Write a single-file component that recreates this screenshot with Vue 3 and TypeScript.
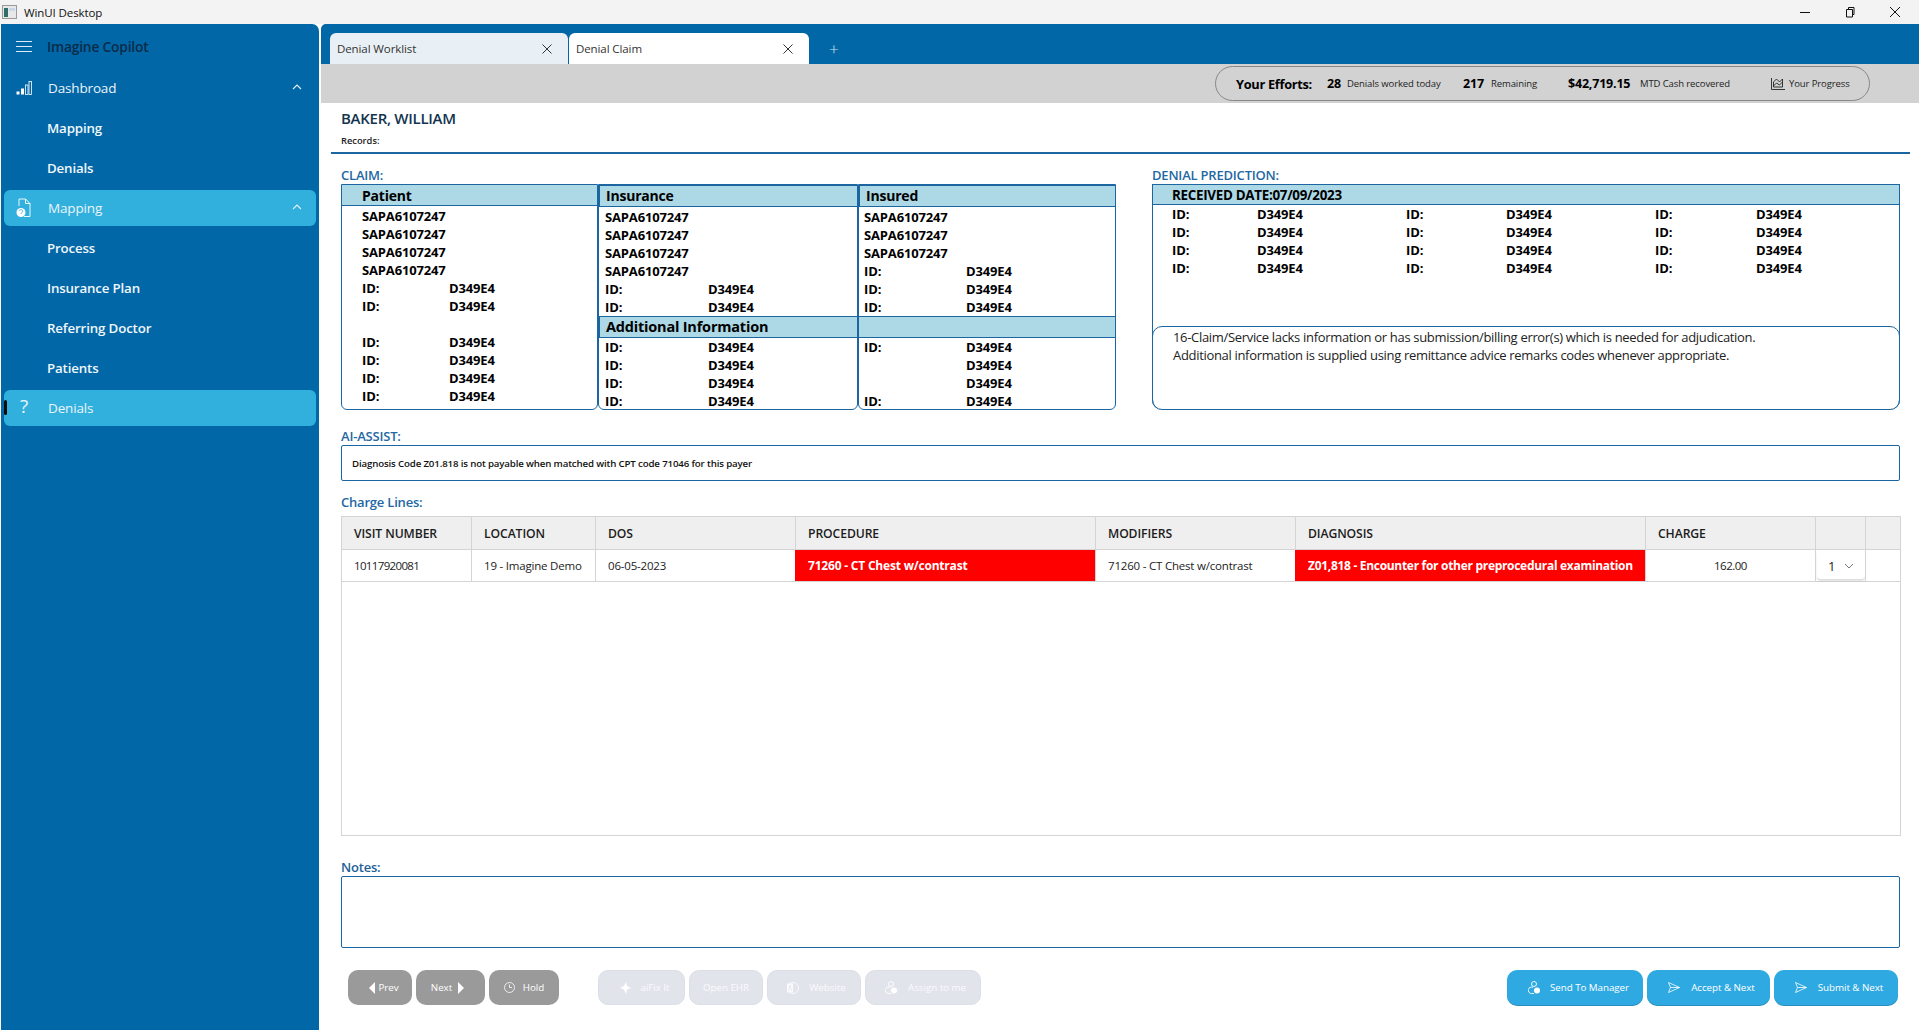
<script setup lang="ts">
const patientRows: [string, string][] = [
  ['SAPA6107247', ''], ['SAPA6107247', ''], ['SAPA6107247', ''], ['SAPA6107247', ''],
  ['ID:', 'D349E4'], ['ID:', 'D349E4'], ['', ''],
  ['ID:', 'D349E4'], ['ID:', 'D349E4'], ['ID:', 'D349E4'], ['ID:', 'D349E4'],
]
const insuranceRows: [string, string][] = [
  ['SAPA6107247', ''], ['SAPA6107247', ''], ['SAPA6107247', ''], ['SAPA6107247', ''],
  ['ID:', 'D349E4'], ['ID:', 'D349E4'],
]
const insuredRows: [string, string][] = [
  ['SAPA6107247', ''], ['SAPA6107247', ''], ['SAPA6107247', ''],
  ['ID:', 'D349E4'], ['ID:', 'D349E4'], ['ID:', 'D349E4'],
]
const addRows: [string, string][] = [['ID:', 'D349E4'], ['ID:', 'D349E4'], ['ID:', 'D349E4'], ['ID:', 'D349E4']]
const add2Rows: [string, string][] = [['ID:', 'D349E4'], ['', 'D349E4'], ['', 'D349E4'], ['ID:', 'D349E4']]
const heads = ['VISIT NUMBER', 'LOCATION', 'DOS', 'PROCEDURE', 'MODIFIERS', 'DIAGNOSIS', 'CHARGE', '', '']
const subItems1 = ['Mapping', 'Denials']
const subItems2 = ['Process', 'Insurance Plan', 'Referring Doctor', 'Patients']
</script>

<template>
  <div class="app">
    <header class="titlebar">
      <svg class="appicon" width="15" height="14" viewBox="0 0 15 14">
        <rect x="0.5" y="0.5" width="14" height="13" fill="#e8e8e8" stroke="#9a9a9a" />
        <rect x="2" y="3" width="4" height="9" fill="#2f6f6a" />
        <rect x="7" y="3" width="6" height="3" fill="#c8d8e8" />
      </svg>
      <span class="apptitle">WinUI Desktop</span>
      <div class="winbtns">
        <svg width="12" height="12" viewBox="0 0 12 12"><path d="M1 6.5h10" stroke="#111" fill="none" /></svg>
        <svg width="12" height="12" viewBox="0 0 12 12"><path d="M2.5 3.5h6v7.5h-6zM4.500 3.500V1.500h5.500v7h-1.500" stroke="#111" fill="none" /></svg>
        <svg width="12" height="12" viewBox="0 0 12 12"><path d="M1 1l10 10M11 1L1 11" stroke="#111" fill="none" /></svg>
      </div>
    </header>

    <div class="body">
      <aside class="sidebar">
        <div class="brand">
          <svg width="16" height="11" viewBox="0 0 16 11"><path d="M0 .5h16M0 5.500h16M0 10.500h16" stroke="#dcecf6" fill="none" /></svg>
          <span>Imagine Copilot</span>
        </div>
        <div class="nav">
          <svg class="navicon" width="16" height="15" viewBox="0 0 16 15">
            <rect x="0.500" y="11" width="3" height="3" fill="#fff" />
            <rect x="5" y="8" width="3" height="6" fill="#fff" />
            <rect x="9.500" y="4.500" width="2.500" height="9.500" fill="none" stroke="#fff" stroke-width="0.800" />
            <rect x="13" y="1" width="2.500" height="13" fill="none" stroke="#fff" stroke-width="0.800" />
          </svg>
          <span>Dashbroad</span>
          <svg class="chev" width="10" height="6" viewBox="0 0 10 6"><path d="M1 5l4-4 4 4" fill="none" stroke="#e6f2fa" stroke-width="1.100" /></svg>
        </div>
        <div v-for="s in subItems1" :key="'a' + s" class="sub">{{ s }}</div>
        <div class="nav selected">
          <svg class="navicon" width="15" height="20" viewBox="0 0 15 20">
            <path d="M3 8V1h6.500L14 5.500V18.500H8M9.500 1v4.500H14" fill="none" stroke="#fff" stroke-width="0.900" />
            <circle cx="5" cy="14.500" r="4.500" fill="#fff" />
            <path d="M3.500 13a1.600 1.600 0 1 1 2.200 1.700L5 15.800" fill="none" stroke="#32b0dd" stroke-width="0.900" />
          </svg>
          <span>Mapping</span>
          <svg class="chev" width="10" height="6" viewBox="0 0 10 6"><path d="M1 5l4-4 4 4" fill="none" stroke="#e6f2fa" stroke-width="1.100" /></svg>
        </div>
        <div v-for="s in subItems2" :key="'b' + s" class="sub">{{ s }}</div>
        <div class="nav selected current">
          <span class="marker"></span>
          <span class="qm">?</span>
          <span>Denials</span>
        </div>
      </aside>

      <main class="main">
        <div class="tabbar">
          <div class="tab">
            <span>Denial Worklist</span>
            <svg width="10" height="10" viewBox="0 0 10 10"><path d="M.5.500l9 9M9.500.500l-9 9" stroke="#333" fill="none" /></svg>
          </div>
          <div class="tab active">
            <span>Denial Claim</span>
            <svg width="10" height="10" viewBox="0 0 10 10"><path d="M.5.500l9 9M9.500.500l-9 9" stroke="#333" fill="none" /></svg>
          </div>
          <span class="plus">+</span>
        </div>

        <div class="effortbar">
          <div class="pill">
            <b class="eff">Your Efforts:</b>
            <b class="num n1">28</b><span class="small s1">Denials worked today</span>
            <b class="num n2">217</b><span class="small s2">Remaining</span>
            <b class="num n3">$42,719.15</b><span class="small s3">MTD Cash recovered</span>
            <svg class="chart" width="14" height="12" viewBox="0 0 14 12">
              <path d="M.5 0v11.500H14M2.500 9V4l3-3 3 3 3-3v8zM2.500 8l3-3 3 2 3-3" fill="none" stroke="#222" stroke-width="0.900" />
            </svg>
            <span class="small s4">Your Progress</span>
          </div>
        </div>

        <div class="content">
          <div class="pagehead">
            <div class="name">BAKER, WILLIAM</div>
            <div class="records">Records:</div>
          </div>

          <div class="toprow">
            <section class="claimcol">
              <div class="lbl">CLAIM:</div>
              <div class="claimbox">
                <div class="panel patient">
                  <div class="phead">Patient</div>
                  <div v-for="(r, i) in patientRows" :key="i" class="kv"><span class="k k87">{{ r[0] }}</span><span>{{ r[1] }}</span></div>
                </div>
                <div class="panel insurance">
                  <div class="phead">Insurance</div>
                  <div class="rows">
                    <div v-for="(r, i) in insuranceRows" :key="i" class="kv"><span class="k k103">{{ r[0] }}</span><span>{{ r[1] }}</span></div>
                  </div>
                  <div class="phead second">Additional Information</div>
                  <div class="rows rows2">
                    <div v-for="(r, i) in addRows" :key="i" class="kv"><span class="k k103">{{ r[0] }}</span><span>{{ r[1] }}</span></div>
                  </div>
                </div>
                <div class="panel insured">
                  <div class="phead">Insured</div>
                  <div class="rows">
                    <div v-for="(r, i) in insuredRows" :key="i" class="kv"><span class="k k102">{{ r[0] }}</span><span>{{ r[1] }}</span></div>
                  </div>
                  <div class="phead second">&nbsp;</div>
                  <div class="rows rows2">
                    <div v-for="(r, i) in add2Rows" :key="i" class="kv"><span class="k k102">{{ r[0] }}</span><span>{{ r[1] }}</span></div>
                  </div>
                </div>
              </div>
            </section>

            <section class="denialcol">
              <div class="lbl">DENIAL PREDICTION:</div>
              <div class="denialbox">
                <div class="dhead">RECEIVED DATE:07/09/2023</div>
                <div class="dgrid">
                  <div v-for="n in 4" :key="n" class="kv drow">
                    <span class="k k85">ID:</span><span class="v149">D349E4</span>
                    <span class="k k100">ID:</span><span class="v149">D349E4</span>
                    <span class="k k101">ID:</span><span>D349E4</span>
                  </div>
                </div>
                <div class="dnote">
                  <div>16-Claim/Service lacks information or has submission/billing error(s) which is needed for adjudication.</div>
                  <div>Additional information is supplied using remittance advice remarks codes whenever appropriate.</div>
                </div>
              </div>
            </section>
          </div>

          <div class="lbl ai">AI-ASSIST:</div>
          <div class="aibox">Diagnosis Code Z01.818 is not payable when matched with CPT code 71046 for this payer</div>

          <div class="lbl charge">Charge Lines:</div>
          <div class="grid">
            <div class="grow ghead">
              <div v-for="(h, i) in heads" :key="i" class="gc">{{ h }}</div>
            </div>
            <div class="grow gdata">
              <div class="gc visit">10117920081</div>
              <div class="gc">19 - Imagine Demo</div>
              <div class="gc">06-05-2023</div>
              <div class="gc red">71260 - CT Chest w/contrast</div>
              <div class="gc">71260 - CT Chest w/contrast</div>
              <div class="gc red diag">Z01,818 - Encounter for other preprocedural examination</div>
              <div class="gc center">162.00</div>
              <div class="gc combo-cell">
                <div class="combo">
                  <span>1</span>
                  <svg width="10" height="6" viewBox="0 0 10 6"><path d="M1 1l4 4 4-4" fill="none" stroke="#777" /></svg>
                </div>
              </div>
              <div class="gc"></div>
            </div>
          </div>

          <div class="lbl notes">Notes:</div>
          <div class="notesbox"></div>

          <div class="actions">
            <div class="grp grp1">
              <button class="btn gray b-prev">
                <svg width="6" height="12" viewBox="0 0 6 12"><path d="M6 0v12L0 6z" fill="#fff" /></svg>
                <span>Prev</span>
              </button>
              <button class="btn gray b-next">
                <span>Next</span>
                <svg width="6" height="12" viewBox="0 0 6 12"><path d="M0 0v12l6-6z" fill="#fff" /></svg>
              </button>
              <button class="btn gray b-hold">
                <svg width="11" height="11" viewBox="0 0 11 11"><circle cx="5.500" cy="5.500" r="5" fill="none" stroke="#fff" stroke-width="0.800" /><path d="M5.500 2.500v3h2.500" fill="none" stroke="#fff" stroke-width="0.800" /></svg>
                <span>Hold</span>
              </button>
            </div>
            <div class="grp grp2">
              <button class="btn off b-fix">
                <svg width="11" height="12" viewBox="0 0 11 12"><path d="M6 0l1 4 4 2-4 1.500L6 12 4 7.500 0 6l4-2z" fill="#fff" /></svg>
                <span>aiFix It</span>
              </button>
              <button class="btn off b-ehr"><span>Open EHR</span></button>
              <button class="btn off b-web">
                <svg width="13" height="12" viewBox="0 0 13 12"><circle cx="7" cy="6" r="5.500" fill="none" stroke="#fff" stroke-width="0.800" /><rect x="1" y="1.500" width="6" height="9" fill="#fff" opacity="0.800" /><path d="M2.500 9l1.500-6 1.500 6" fill="none" stroke="#e2e4ec" stroke-width="0.800" /></svg>
                <span>Website</span>
              </button>
              <button class="btn off b-assign">
                <svg width="12" height="13" viewBox="0 0 12 13"><circle cx="6" cy="3" r="2.500" fill="none" stroke="#fff" stroke-width="0.900" /><path d="M5 6.500A3.200 3.200 0 1 0 3.500 12.500H6" fill="none" stroke="#fff" stroke-width="0.900" /><circle cx="9" cy="9.500" r="3" fill="#fff" /></svg>
                <span>Assign to me</span>
              </button>
            </div>
            <div class="grp grp3">
              <button class="btn blue b-send">
                <svg width="12" height="13" viewBox="0 0 12 13"><circle cx="6" cy="3" r="2.500" fill="none" stroke="#fff" stroke-width="0.900" /><path d="M5 6.500A3.200 3.200 0 1 0 3.500 12.500H6" fill="none" stroke="#fff" stroke-width="0.900" /><circle cx="9" cy="9.500" r="3" fill="#fff" /></svg>
                <span>Send To Manager</span>
              </button>
              <button class="btn blue b-accept">
                <svg width="12" height="11" viewBox="0 0 12 11"><path d="M.5.500L11.500 5.500.5 10.500 2.500 5.500zM2.500 5.500h9" fill="none" stroke="#fff" stroke-width="0.800" /></svg>
                <span>Accept &amp; Next</span>
              </button>
              <button class="btn blue b-submit">
                <svg width="12" height="11" viewBox="0 0 12 11"><path d="M.5.500L11.500 5.500.5 10.500 2.500 5.500zM2.500 5.500h9" fill="none" stroke="#fff" stroke-width="0.800" /></svg>
                <span>Submit &amp; Next</span>
              </button>
            </div>
          </div>
        </div>
      </main>
    </div>
  </div>
</template>

<style>
html, body { margin: 0; padding: 0; overflow: hidden; background: #fff; }
</style>

<style scoped>
.app {
  width: 1919px; height: 1030px; display: flex; flex-direction: column; overflow: hidden;
  font-family: "Open Sans", "Noto Sans", sans-serif; color: #000; background: #fff;
}
.titlebar { height: 24px; background: #f3f3f3; display: flex; align-items: center; flex: none; }
.appicon { margin-left: 2px; }
.apptitle { font-size: 11.500px; margin-left: 7px; color: #111; letter-spacing: -0.1px; }
.winbtns { margin-left: auto; display: flex; align-items: center; gap: 33px; padding-right: 18px; }

.body { flex: 1; display: flex; min-height: 0; padding-left: 1px; }
.sidebar { width: 318px; flex: none; background: #0267a7; border-top-right-radius: 7px; display: flex; flex-direction: column; color: #eaf4fb; }
.brand { height: 44px; flex: none; display: flex; align-items: center; padding-left: 15px; gap: 15px; font-size: 13.800px; font-weight: 600; color: #0b2c48; letter-spacing: -0.2px; }
.nav { height: 36px; flex: none; margin: 2px 3px; display: flex; align-items: center; position: relative; font-size: 13.500px; color: #eaf4fb; border-radius: 6px; padding-left: 44px; letter-spacing: -0.15px; }
.navicon { position: absolute; left: 12px; top: 50%; transform: translateY(-50%); }
.chev { position: absolute; right: 14px; top: 14px; }
.selected { background: #32b0dd; }
.sub { height: 40px; flex: none; display: flex; align-items: center; padding-left: 46px; font-size: 13.300px; font-weight: 600; color: #f0f7fc; letter-spacing: -0.15px; }
.marker { position: absolute; left: 0; top: 10px; width: 3px; height: 15px; background: #0a0a0a; border-radius: 2px; }
.qm { position: absolute; left: 16px; font-size: 19px; font-weight: 400; top: 3px; color: #e8f5fb; }

.main { flex: 1; margin-left: 2px; display: flex; flex-direction: column; min-width: 0; }
.tabbar { height: 40px; background: #0267a7; display: flex; align-items: flex-end; padding-left: 9px; flex: none; border-top-left-radius: 5px; }
.tab { width: 238px; height: 31px; box-sizing: border-box; background: #e9f0f5; border-radius: 6px 6px 0 0; margin-right: 1px; display: flex; align-items: center; justify-content: space-between; padding: 0 16px 0 7px; font-size: 11.500px; color: #333; letter-spacing: -0.1px; }
.tab.active { background: #fff; width: 240px; }
.plus { color: #cfe2ef; font-size: 17px; font-weight: 300; margin-left: 19px; align-self: center; margin-top: 8px; }

.effortbar { height: 39px; background: #d2d2d2; flex: none; position: relative; box-sizing: border-box; padding: 2px 0 0 894px; }
.pill { width: 655px; height: 35px; box-sizing: border-box; border: 1px solid #888; border-radius: 18px; display: flex; align-items: center; padding-left: 20px; }
.eff { font-size: 12.800px; font-weight: 700; width: 91px; letter-spacing: -0.3px; white-space: nowrap; }
.num { font-size: 12.500px; font-weight: 700; letter-spacing: -0.2px; white-space: nowrap; }
.n1 { width: 20px; } .n2 { width: 28px; } .n3 { width: 72px; }
.small { font-size: 9.500px; letter-spacing: -0.1px; white-space: nowrap; color: #222; }
.s1 { width: 116px; } .s2 { width: 77px; } .s3 { width: 131px; }
.chart { margin-right: 4px; }

.content { flex: 1; display: flex; flex-direction: column; padding: 0 19px 0 20px; min-height: 0; }
.pagehead { margin: 0 -10px; padding: 0 10px; border-bottom: 2px solid #1b66a0; flex: none; height: 49px; }
.name { font-size: 15px; font-weight: 600; color: #13344f; line-height: 20px; padding-top: 5px; letter-spacing: -0.28px; }
.records { font-size: 9.300px; font-weight: 600; color: #222; line-height: 14px; margin-top: 6px; }
.lbl { font-size: 13px; color: #2368a2; line-height: 15px; height: 16px; letter-spacing: -0.2px; font-weight: 600; }

.toprow { display: flex; gap: 36px; margin-top: 14px; flex: none; }
.claimcol { width: 775px; }
.denialcol { width: 748px; }
.claimbox { display: flex; height: 226px; }
.panel { box-sizing: border-box; border: 1px solid #1b66a0; border-radius: 0 0 6px 6px; font-size: 13px; font-weight: 700; }
.patient { width: 257px; }
.insurance { width: 260px; }
.insured { width: 258px; }
.phead { background: #add8e6; border-bottom: 1px solid #1b66a0; font-size: 14px; font-weight: 700; letter-spacing: -0.2px; line-height: 20px; height: 21px; box-sizing: border-box; display: flex; align-items: center; }
.patient .phead { padding: 1px 0 0 20px; margin-bottom: 1px; height: 21px; }
.insurance .phead, .insured .phead { border-top: 1px solid #1b66a0; padding-left: 6px; height: 22px; }
.insurance .phead, .insured .phead:first-child { border-left: 1px solid #1b66a0; }
.phead.second { border-top: 1px solid #1b66a0; height: 22px; font-size: 14.500px; }
.rows { padding: 1px 0 0 6px; }
.insured .rows { padding-left: 5px; }
.rows2 { padding-top: 0; height: 72px; }
.patient .kv { padding-left: 20px; }
.kv { height: 18px; line-height: 19px; display: flex; letter-spacing: -0.15px; white-space: nowrap; }
.k { flex: none; }
.k85 { width: 85px; } .k87 { width: 87px; } .k100 { width: 100px; } .k101 { width: 101px; } .k102 { width: 102px; } .k103 { width: 103px; }
.v149 { width: 149px; flex: none; }

.denialbox { height: 226px; box-sizing: border-box; border: 1px solid #1b66a0; border-bottom: none; display: flex; flex-direction: column; border-radius: 0 0 10px 10px; }
.dhead { height: 19px; background: #add8e6; border-bottom: 1px solid #1b66a0; font-size: 13.400px; font-weight: 700; line-height: 20px; padding-left: 19px; letter-spacing: -0.3px; flex: none; }
.dgrid { padding: 0 0 0 19px; font-size: 13px; font-weight: 700; flex: 1; }
.dgrid .kv { line-height: 18px; }
.dnote { height: 84px; flex: none; box-sizing: border-box; margin: 0 -1px; border: 1px solid #1b66a0; border-radius: 10px; padding: 1px 0 0 20px; font-size: 13px; line-height: 18px; letter-spacing: -0.32px; color: #222; }

.ai { margin-top: 19px; flex: none; }
.aibox { height: 36px; flex: none; box-sizing: border-box; border: 1px solid #1b66a0; border-radius: 2px; display: flex; align-items: center; padding-left: 10px; font-size: 9.700px; font-weight: 600; color: #111; letter-spacing: -0.15px; }
.charge { margin-top: 14px; flex: none; }
.grid { margin-top: 5px; height: 320px; flex: none; box-sizing: border-box; border: 1px solid #d4d4d4; width: 1560px; }
.grow { display: grid; grid-template-columns: 129px 124px 200px 300px 200px 350px 170px 50px 35px; border-bottom: 1px solid #d4d4d4; }
.ghead { height: 33px; background: #efefef; font-weight: 600; font-size: 12.200px; color: #1c1c1c; letter-spacing: -0.1px; box-sizing: border-box; }
.gdata { height: 32px; box-sizing: border-box; font-size: 11.500px; color: #222; letter-spacing: -0.2px; }
.gc { display: flex; align-items: center; padding-left: 12px; border-left: 1px solid #d4d4d4; white-space: nowrap; box-sizing: border-box; }
.gc:first-child { border-left: none; }
.gc.visit { letter-spacing: -0.65px; }
.gc.red { background: #ff0000; color: #fff; font-weight: 700; font-size: 12px; letter-spacing: -0.2px; border-left-color: #ff0000; }
.gc.red.diag { letter-spacing: -0.3px; }
.gc.center { justify-content: center; padding-left: 0; padding-right: 0; letter-spacing: -0.5px; }
.combo-cell { padding: 0; align-items: flex-start; }
.combo { width: 49px; height: 28px; margin-top: 2px; margin-left: 1px; background: #fff; border-bottom: 1px solid #ddd; border-radius: 0 0 4px 4px; display: flex; align-items: center; gap: 9px; padding-left: 11px; box-sizing: border-box; font-size: 13px; box-shadow: 0 1px 2px rgba(0,0,0,.12); }

.notes { margin-top: 24px; flex: none; color: #1d5f97; }
.notesbox { height: 72px; flex: none; box-sizing: border-box; border: 1px solid #1b66a0; border-radius: 2px; }
.actions { margin-top: 22px; display: flex; padding-left: 7px; flex: none; }
.grp { display: flex; gap: 4px; }
.grp2 { margin-left: 39px; }
.grp3 { margin-left: auto; margin-right: 2px; }
.btn { height: 35px; border: none; border-radius: 10px; display: flex; align-items: center; justify-content: center; gap: 8px; color: #fff; font-family: inherit; font-size: 9.800px; padding: 0; box-sizing: border-box; white-space: nowrap; letter-spacing: -0.05px; }
.gray { background: #9a9a9a; }
.off { background: #e2e4ec; border: 1px solid #dcdee8; color: #fafafc; }
.blue { background: #2fa9e1; box-shadow: 0 1px 0 #2a8fc0; gap: 11px; padding-left: 6px; }
.b-prev { width: 64px; gap: 3px; padding-left: 8px; } .b-next { width: 69px; gap: 6px; padding-right: 6px; } .b-hold { width: 70px; }
.b-fix { width: 87px; gap: 10px; padding-left: 6px; } .b-ehr { width: 74px; } .b-web { width: 94px; gap: 10px; padding-left: 4px; } .b-assign { width: 116px; gap: 11px; padding-left: 5px; }
.b-send { width: 136px; gap: 10px; padding-left: 7px; } .b-accept { width: 123px; } .b-submit { width: 124px; }
</style>
